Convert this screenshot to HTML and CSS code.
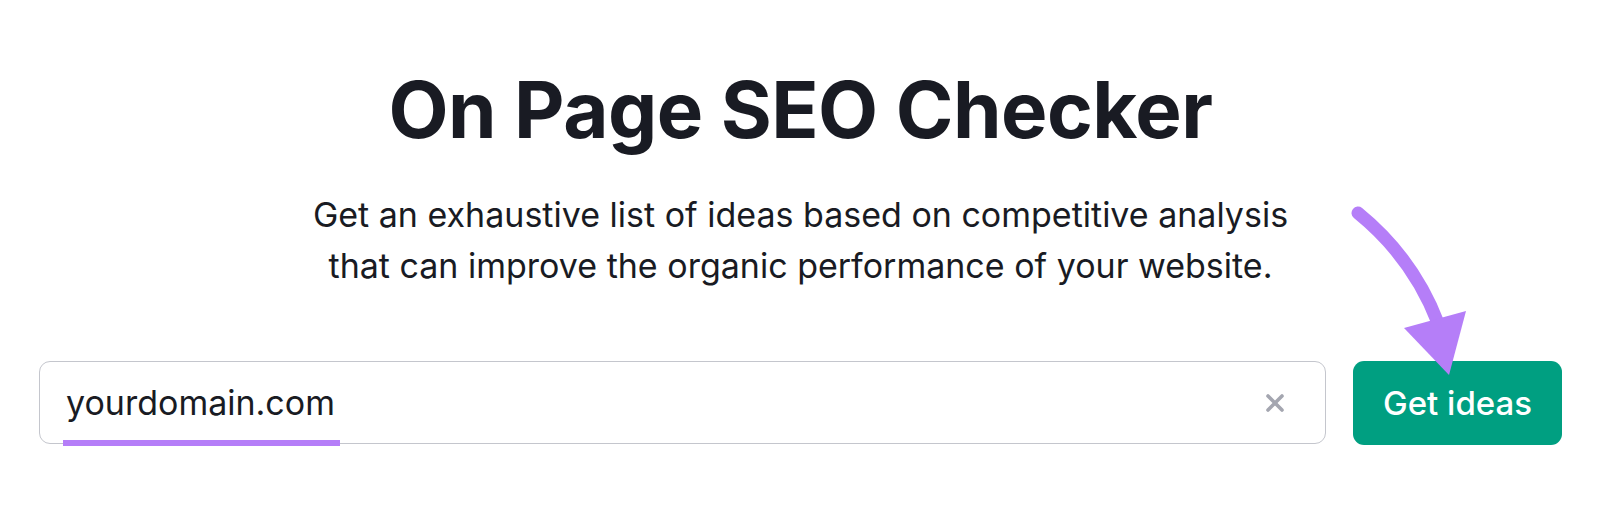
FILE: index.html
```html
<!DOCTYPE html>
<html lang="en">
<head>
<meta charset="utf-8">
<title>On Page SEO Checker</title>
<link rel="stylesheet" href="styles.css">
</head>
<body>
<main class="page">
  <h1 class="title">On Page SEO Checker</h1>
  <p class="subtitle">Get an exhaustive list of ideas based on competitive analysis<br>that can improve the organic performance of your website.</p>
  <div class="search">
    <div class="field">
      <span class="field-text">yourdomain.com</span>
      <span class="underline"></span>
      <svg class="clear" width="20" height="20" viewBox="0 0 20 20" aria-hidden="true">
        <path d="M3 3 L17 17 M17 3 L3 17" stroke="#a4a6b0" stroke-width="3.6" stroke-linecap="round" fill="none"/>
      </svg>
    </div>
    <button class="btn">Get ideas</button>
    <svg class="arrow" width="140" height="190" viewBox="0 0 140 190" aria-hidden="true">
      <path d="M8 22 C 40 48, 70 85, 88 132" stroke="#b57ef8" stroke-width="13" stroke-linecap="round" fill="none"/>
      <polygon points="54,137 116,120 99,184" fill="#b57ef8"/>
    </svg>
  </div>
</main>
</body>
</html>
```
FILE: styles.css
```css
html, body {
  margin: 0;
  padding: 0;
  background: #ffffff;
}
body {
  font-family: Inter, "Noto Sans", sans-serif;
  color: #191b23;
}
.page {
  width: 1600px;
  height: 510px;
  padding: 62px 38px 0 39px;
  box-sizing: border-box;
  display: flex;
  flex-direction: column;
  align-items: center;
}
.title {
  margin: 0;
  font-size: 78px;
  line-height: 96px;
  font-weight: 700;
  letter-spacing: -0.5px;
  text-align: center;
}
.subtitle {
  margin: 31px 0 0;
  font-size: 34px;
  line-height: 51px;
  font-weight: 400;
  letter-spacing: 0;
  text-align: center;
}
.search {
  position: relative;
  align-self: stretch;
  margin-top: 70px;
  display: flex;
  gap: 27px;
}
.field {
  position: relative;
  flex: 1;
  height: 83px;
  box-sizing: border-box;
  border: 1.5px solid #c4c6cd;
  border-radius: 11px;
  display: flex;
  align-items: center;
  padding: 0 40px 0 26px;
}
.field-text {
  flex: 1;
  font-size: 34px;
  color: #191b23;
}
.underline {
  position: absolute;
  left: 23px;
  bottom: -3px;
  width: 277px;
  height: 6px;
  background: #b57ef8;
}
.clear {
  display: block;
}
.btn {
  width: 209px;
  height: 84px;
  border: none;
  border-radius: 11px;
  background: #009f81;
  color: #ffffff;
  font-family: Inter, "Noto Sans", sans-serif;
  font-size: 33px;
  font-weight: 500;
  padding: 0;
}
.arrow {
  position: absolute;
  right: 72px;
  top: -170px;
}
```
